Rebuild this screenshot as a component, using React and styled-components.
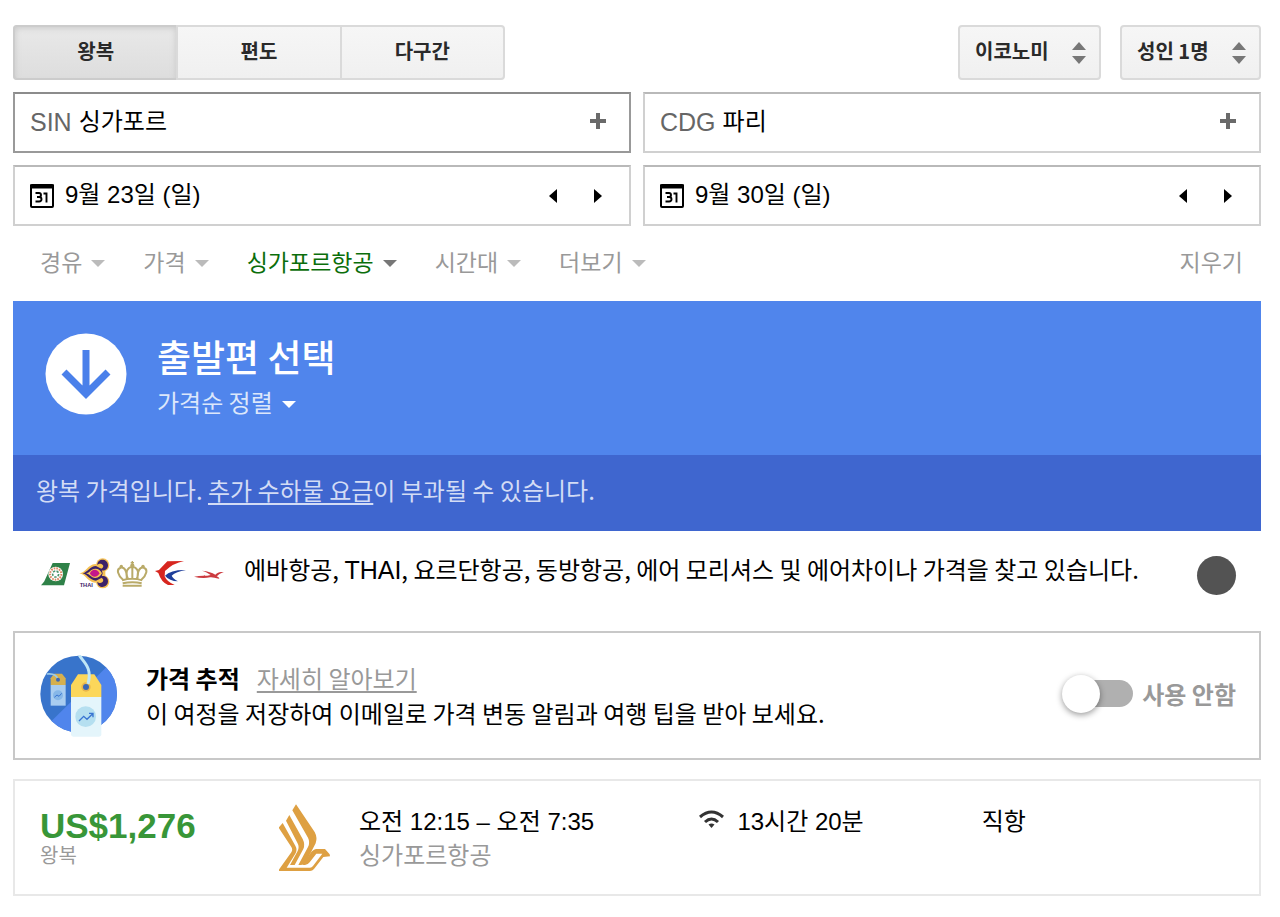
import React from "react";
import styled, { createGlobalStyle, css } from "styled-components";

const korean = `"Noto Sans CJK KR", "Liberation Sans", sans-serif`;
const latin = `"Liberation Sans", "Noto Sans CJK KR", sans-serif`;

const GlobalStyle = createGlobalStyle`
  *, *::before, *::after { box-sizing: border-box; }
  body { margin: 0; background: #fff; color: #000; font: 24px/36px ${korean}; }
  button, input, select { margin: 0; padding: 0; border: 0; background: none; color: inherit; font: inherit; }
  button, select { cursor: pointer; }
  svg { display: block; flex: none; }
`;

const Page = styled.main`
  padding: 25px 19px 21px 13px;
`;

const Toolbar = styled.div`
  display: flex;
  gap: 19px;
  margin-bottom: 12px;
`;

const raised = css`
  border: 2px solid #dadada;
  border-radius: 4px;
  background: linear-gradient(#f6f6f6, #f0f0f0);
`;

const TripTypes = styled.div`
  ${raised}
  display: flex;
  width: 492px;
  height: 55px;
  margin-right: auto;
`;

const TripType = styled.button`
  flex: 1;
  padding-bottom: 4px;
  border-left: 2px solid #dadada;
  color: #2a2a2a;
  font-size: 20px;
  font-weight: 700;
  line-height: 30px;
  ${(p) => p.$active && css`
    margin: -2px 0 -2px -2px;
    border-left-color: #cccccc;
    border-radius: 4px 0 0 4px;
    background: linear-gradient(#e9e9e9, #dddddd);
    box-shadow: inset 0 2px 0 #cccccc, inset 0 -2px 0 #cccccc, inset 0 3px 6px #c8c8c8;
  `}
`;

const SelectBox = styled.div`
  position: relative;
  svg {
    position: absolute;
    right: 15px;
    top: 17px;
    pointer-events: none;
  }
`;

const Select = styled.select`
  ${raised}
  appearance: none;
  height: 55px;
  padding: 0 50px 4px 15px;
  color: #2a2a2a;
  font-size: 20px;
  font-weight: 700;
`;

const Fields = styled.div`
  display: grid;
  grid-template-columns: 1fr 1fr;
  gap: 12px;
`;

const Field = styled.div`
  display: flex;
  align-items: center;
  height: 61px;
  padding: 0 15px;
  border: 2px solid ${(p) => (p.$active ? "#999" : "#d0d0d0")};
  border-top-color: ${(p) => (p.$active ? "#8c8c8c" : "#b9b9b9")};
`;

const Code = styled.label`
  margin-right: 7px;
  padding-bottom: 2px;
  color: #666;
  font-family: ${latin};
  font-size: 25px;
`;

const TextInput = styled.input`
  flex: 1;
  min-width: 0;
  padding-bottom: 2px;
  outline: 0;
  font-family: ${latin};
`;

const CalendarIcon = styled.label`
  margin-right: 11px;
`;

const IconButton = styled.button`
  display: grid;
  place-items: center;
  width: 32px;
  height: 40px;
`;

const AddButton = styled(IconButton)`
  padding-bottom: 4px;
`;

const DateNav = styled.div`
  display: flex;
  gap: 13px;
`;

const Filters = styled.nav`
  display: flex;
  gap: 38px;
  padding: 17px 18px 22px 27px;
`;

const MenuButton = styled.button`
  display: flex;
  align-items: center;
  gap: 9px;
  color: ${(p) => p.$color};
  font-size: ${(p) => p.$size || 23}px;
  line-height: 36px;
  svg { margin-top: 4px; }
`;

const Clear = styled(MenuButton)`
  margin-left: auto;
`;

const Banner = styled.header`
  display: flex;
  align-items: center;
  gap: 30px;
  height: 154px;
  padding: 0 32px 8px;
  background: #5085ec;
  color: #fff;
`;

const Title = styled.h1`
  margin: 0;
  font-size: 37px;
  font-weight: 500;
  line-height: 56px;
`;

const Notice = styled.p`
  margin: 0;
  padding: 17px 23px 23px;
  background: #3f66cf;
  color: #d3dcf5;
`;

const Link = styled.a`
  color: ${(p) => p.$color || "inherit"};
  text-decoration: underline;
  text-decoration-thickness: 2px;
  text-underline-offset: 3px;
`;

const Searching = styled.section`
  display: flex;
  align-items: center;
  height: 100px;
  padding: 0 25px 12px 27px;
`;

const Logos = styled.div`
  display: flex;
  gap: 6px;
  margin-right: 20px;
  padding-bottom: 4px;
`;

const Status = styled.p`
  flex: 1;
  margin: 0;
  padding-bottom: 12px;
`;

const Latin = styled.span`
  font-family: ${latin};
  font-size: 25px;
`;

const Spinner = styled.div`
  width: 39px;
  height: 39px;
  border-radius: 50%;
  background: #535353;
`;

const Tracker = styled.section`
  display: flex;
  align-items: center;
  height: 129px;
  margin-bottom: 19px;
  padding: 0 23px 0 25px;
  border: 2px solid #c8c8c8;
`;

const TrackerText = styled.div`
  flex: 1;
  margin-left: 28px;
  padding-bottom: 2px;
  line-height: 35px;
`;

const TrackerHeading = styled.h2`
  display: inline;
  margin: 0 17px 0 0;
  font-size: 24px;
`;

const TrackerBody = styled.p`
  margin: 0;
`;

const SwitchLabel = styled.label`
  display: flex;
  align-items: center;
  gap: 9px;
  padding-bottom: 4px;
  color: #999;
  font-weight: 700;
`;

const Switch = styled.input`
  appearance: none;
  display: flex;
  align-items: center;
  width: 71px;
  height: 38px;
  cursor: pointer;
  &::before {
    content: "";
    width: 38px;
    height: 38px;
    border-radius: 50%;
    background: #fff;
    box-shadow: 0 2px 6px rgba(0, 0, 0, 0.4);
    z-index: 1;
  }
  &::after {
    content: "";
    width: 57px;
    height: 27px;
    margin-left: -24px;
    border-radius: 14px;
    background: #b0b0b0;
  }
`;

const Flight = styled.article`
  display: grid;
  grid-template-columns: 239px 80px 340fr 282fr 254fr;
  height: 117px;
  padding: 23px 23px 0 25px;
  border: 2px solid #e8e8e8;
`;

const Price = styled.div`
  padding-top: 2px;
  color: #389638;
  font: 700 35px/40px ${latin};
`;

const Muted = styled.div`
  color: #999;
  line-height: 28px;
`;

const Fare = styled(Muted)`
  font-family: ${latin};
  font-size: 20px;
  line-height: 20px;
`;

const Primary = styled.div`
  display: flex;
  gap: 13px;
  font-family: ${latin};
  line-height: 36px;
  svg { margin-top: 6px; }
`;

const Caret = ({ color }) => (
  <svg width="14" height="9" viewBox="0 0 14 9"><path d="M0 1h14L7 8z" fill={color} /></svg>
);

const UpDown = () => (
  <svg width="14" height="22" viewBox="0 0 14 22"><path d="M0 8 7 0l7 8zM0 14h14l-7 8z" fill="#777" /></svg>
);

const Plus = () => (
  <svg width="16" height="16" viewBox="0 0 16 16"><path d="M6 0h4v6h6v4h-6v6H6v-6H0V6h6z" fill="#6a6a6a" /></svg>
);

const Triangle = ({ left }) => (
  <svg width="8" height="14" viewBox="0 0 8 14"><path d={left ? "M8 0v14L0 7z" : "M0 0v14l8-7z"} /></svg>
);

const Calendar = () => (
  <svg width="24" height="24" viewBox="0 0 24 24" fill="none" stroke="#000" strokeWidth="2">
    <rect x="1" y="1" width="22" height="22" rx="1" />
    <path d="M0 2.500h24" strokeWidth="4" />
    <path d="M5.500 9h3.500q2 0 2 2t-2 2h-2h2q2.500 0 2.500 2.200T9 17.500H5.500M13.500 9.500H16.500V18.500" strokeWidth="1.900" />
  </svg>
);

const DownArrow = () => (
  <svg width="82" height="82" viewBox="0 0 82 82">
    <circle cx="41" cy="41" r="40.500" fill="#fff" />
    <path d="M41 17v43M19 39l22 22 22-22" fill="none" stroke="#4a80ea" strokeWidth="7" />
  </svg>
);

const Eva = () => (
  <svg width="32" height="32" viewBox="0 0 96 96">
    <path d="M38 18h52L72 85H3q5-5 10-12z" fill="#2f8148" />
    <circle cx="47" cy="51" r="22" fill="#fff" />
    <circle cx="47" cy="51" r="17" fill="none" stroke="#dc8a63" strokeWidth="6" strokeDasharray="5 3" />
    <circle cx="47" cy="51" r="9" fill="none" stroke="#4c946b" strokeWidth="5" strokeDasharray="7 4" />
  </svg>
);

const Thai = () => (
  <svg width="32" height="32" viewBox="0 0 96 96">
    <g fill="#f6c254">
      <circle cx="74" cy="24" r="20" /><circle cx="74" cy="74" r="20" />
      <path d="M4 49c20-2 24-26 48-28l30 8v40l-30 8C28 76 24 52 4 49z" />
    </g>
    <g fill="#3c2268">
      <path d="M14 49c16-4 22-22 40-22l16 8 4 14-4 14-16 8c-18 0-24-18-40-22z" />
      <path d="M58 24c0-22 32-20 32 1 0 16-18 20-30 11 12 2 18-5 15-11-3-6-12-7-17-1z" />
      <path d="M58 74c0 22 32 20 32-1 0-16-18-20-30-11 12-2 18 5 15 11-3 6-12 7-17 1z" />
    </g>
    <path d="M24 49c12-2 14-14 28-14 10 0 16 6 20 14-4 8-10 14-20 14-14 0-16-12-28-14z" fill="#f6c254" />
    <path d="M36 49c4-14 24-14 28 0-4 14-24 14-28 0z" fill="#c5178a" />
    <text x="5" y="91" fontFamily="Liberation Sans" fontSize="17" fontWeight="700" fill="#3c2268">THAI</text>
  </svg>
);

const Crown = () => (
  <svg width="32" height="32" viewBox="0 0 96 96" fill="none" stroke="#b9aa68" strokeWidth="6">
    <path d="M21 68C5 54 0 36 14 32c12-2 20 12 18 34M76 68c16-14 21-32 7-36-12-2-20 12-18 34M36 66C26 44 36 30 49 29c13 1 23 15 13 37M49 27v40M18 70q31-9 61 0M20 79q30-7 57 0M20 86h57" />
    <path d="M49 12v12M44 17h10" strokeWidth="4" />
    <g fill="#b9aa68" stroke="none"><circle cx="16" cy="28" r="5" /><circle cx="49" cy="25" r="6" /><circle cx="81" cy="28" r="5" /></g>
  </svg>
);

const ChinaEastern = () => (
  <svg width="32" height="32" viewBox="0 0 96 96">
    <path d="M3 42 15 39 40 13 90 12Q58 18 33 42L32 58Q38 74 62 84L42 84Q22 76 13 48z" fill="#d7261f" />
    <path d="M33 56Q50 38 96 39 66 44 53 56 56 64 72 73 46 72 33 56z" fill="#1f3f9b" />
  </svg>
);

const Mauritius = () => (
  <svg width="32" height="32" viewBox="0 0 96 96">
    <path d="M6 59c20-4 38-1 50-5-8-6-16-10-26-13 18 1 30 6 40 12 8-8 14-10 26-7-12 2-16 8-22 12 4 2 8 4 8 7-14-1-18-5-28-4-16 3-32 2-48-2z" fill="#cc3a3f" />
  </svg>
);

const PriceTags = () => (
  <svg width="78" height="82" viewBox="30 46 234 246">
    <clipPath id="disc"><circle cx="146" cy="163" r="115" /></clipPath>
    <g clipPath="url(#disc)">
      <rect x="30" y="46" width="234" height="234" fill="#3874cb" />
      <path d="M262 50 50 258v40h220z" fill="#5085ec" />
    </g>
    <path d="M72 102h24l11 14v20H62v-20z" fill="#d5b04f" />
    <path d="M62 136h45v62H62z" fill="#a9cdf0" />
    <path d="M50 103c16-2 30 2 34 16" fill="none" stroke="#9ccbe9" strokeWidth="5" />
    <circle cx="84" cy="120" r="6" fill="#3b67b5" />
    <circle cx="84" cy="167" r="15" fill="#86b7e8" />
    <path d="m73 173 8-7 6 4 8-9" fill="none" stroke="#3975d2" strokeWidth="3" />
    <path d="M144 104h49l21 32v36h-91v-36z" fill="#fcd75a" />
    <path d="M123 172h91v112q0 7-7 7h-77q-7 0-7-7z" fill="#e4f5fb" />
    <circle cx="168" cy="142" r="14" fill="#e8b64c" />
    <circle cx="168" cy="142" r="9" fill="#3b67b5" />
    <path d="M148 47c12 20 40 36 26 86" fill="none" stroke="#bfe6f6" strokeWidth="9" />
    <circle cx="167" cy="231" r="31" fill="#b5dff0" />
    <path d="m147 244 14-14 10 9 17-17M177 221h12v12" fill="none" stroke="#3975d2" strokeWidth="4" />
  </svg>
);

const Singapore = () => (
  <svg width="51" height="68" viewBox="838 101 153 204" fill="#dea042">
    <path d="M889 102 945 185q9 17 3 34l-26 50q-7 15-19 15h-7l29-54q7-14 0-28l-47-82z" />
    <path d="M869 134 909 206q8 16 2 30l-26 48h-14l23-42q6-13-1-25l-34-66z" />
    <path d="M849 158 887 226q7 12 0 24l-26 42h70q5 0 9-5l28-37h-18l-20 26q-6 8-14 8h-7l22-34q10-14 20-14h25l14 16 1 6-20 2-28 36q-5 6-12 6h-96l40-56q5-8 0-16l-38-58z" />
  </svg>
);

const Wifi = () => (
  <svg width="25" height="18" viewBox="0 0 25 18" fill="none" stroke="#333" strokeWidth="3">
    <path d="M1 7q11.500-10 23 0M6 12q6.500-6 13 0" />
    <path d="m9.500 14.500 3 3.500 3-3.500q-3-2-6 0z" fill="#333" stroke="none" />
  </svg>
);

const places = [
  { id: "from", code: "SIN", city: "싱가포르", active: true },
  { id: "to", code: "CDG", city: "파리" },
];

const dates = [
  { id: "depart", value: "9월 23일 (일)" },
  { id: "return", value: "9월 30일 (일)" },
];

const filters = ["경유", "가격", "싱가포르항공", "시간대", "더보기"];

export default function App() {
  return (
    <Page>
      <GlobalStyle />
      <Toolbar>
        <TripTypes>
          <TripType $active>왕복</TripType>
          <TripType>편도</TripType>
          <TripType>다구간</TripType>
        </TripTypes>
        <SelectBox>
          <Select aria-label="좌석 등급"><option>이코노미</option></Select>
          <UpDown />
        </SelectBox>
        <SelectBox>
          <Select aria-label="승객"><option>성인 1명</option></Select>
          <UpDown />
        </SelectBox>
      </Toolbar>

      <Fields>
        {places.map((p) => (
          <Field key={p.id} $active={p.active}>
            <Code htmlFor={p.id}>{p.code}</Code>
            <TextInput id={p.id} defaultValue={p.city} />
            <AddButton aria-label="추가"><Plus /></AddButton>
          </Field>
        ))}
        {dates.map((d) => (
          <Field key={d.id}>
            <CalendarIcon htmlFor={d.id} aria-label="날짜"><Calendar /></CalendarIcon>
            <TextInput id={d.id} defaultValue={d.value} />
            <DateNav>
              <IconButton aria-label="이전 날짜"><Triangle left /></IconButton>
              <IconButton aria-label="다음 날짜"><Triangle /></IconButton>
            </DateNav>
          </Field>
        ))}
      </Fields>

      <Filters>
        {filters.map((name) => {
          const on = name === "싱가포르항공";
          return (
            <MenuButton key={name} $color={on ? "#0b6e0b" : "#999"}>
              {name}
              <Caret color={on ? "#777" : "#bbb"} />
            </MenuButton>
          );
        })}
        <Clear $color="#999">지우기</Clear>
      </Filters>

      <Banner>
        <DownArrow />
        <div>
          <Title>출발편 선택</Title>
          <MenuButton $color="#dce7fb" $size={24}>
            가격순 정렬
            <Caret color="#fff" />
          </MenuButton>
        </div>
      </Banner>
      <Notice>
        왕복 가격입니다. <Link href="#baggage">추가 수하물 요금</Link>이 부과될 수 있습니다.
      </Notice>

      <Searching>
        <Logos>
          <Eva />
          <Thai />
          <Crown />
          <ChinaEastern />
          <Mauritius />
        </Logos>
        <Status>
          에바항공, <Latin>THAI</Latin>, 요르단항공, 동방항공, 에어 모리셔스 및 에어차이나 가격을 찾고 있습니다.
        </Status>
        <Spinner />
      </Searching>

      <Tracker>
        <PriceTags />
        <TrackerText>
          <TrackerHeading>가격 추적</TrackerHeading>
          <Link href="#tracking" $color="#999">자세히 알아보기</Link>
          <TrackerBody>이 여정을 저장하여 이메일로 가격 변동 알림과 여행 팁을 받아 보세요.</TrackerBody>
        </TrackerText>
        <SwitchLabel>
          <Switch type="checkbox" role="switch" />
          사용 안함
        </SwitchLabel>
      </Tracker>

      <Flight>
        <div>
          <Price>US$1,276</Price>
          <Fare>왕복</Fare>
        </div>
        <Singapore />
        <div>
          <Primary>오전 12:15 – 오전 7:35</Primary>
          <Muted>싱가포르항공</Muted>
        </div>
        <Primary>
          <Wifi />
          13시간 20분
        </Primary>
        <Primary>직항</Primary>
      </Flight>
    </Page>
  );
}
